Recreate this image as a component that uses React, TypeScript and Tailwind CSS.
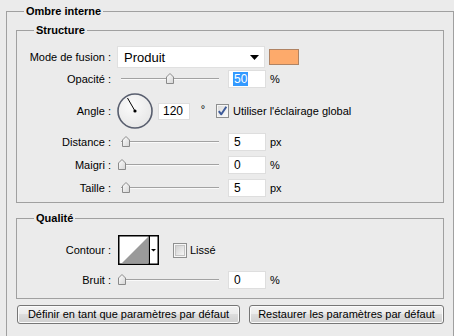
import React from "react";

function Thumb() {
  return (
    <svg width="8" height="11" viewBox="0 0 8 11">
      <defs>
        <linearGradient id="tg" x1="0" y1="0" x2="1" y2="1">
          <stop offset="0" stopColor="#ffffff" />
          <stop offset="1" stopColor="#d4d4d4" />
        </linearGradient>
      </defs>
      <path d="M0.5 4 L4 0.5 L7.5 4 V10.5 H0.5 Z" fill="url(#tg)" stroke="#8a8a8a" strokeWidth="1" />
    </svg>
  );
}

function Slider({ center }: { center: number }) {
  // container starts at x=117, width 104
  const left = center - 4 - 117;
  return (
    <div className="relative w-[104px] h-[12px]">
      <div className="absolute left-[4px] top-[5px] w-[98px] h-[1px] bg-[#a2a2a2]" />
      <div className="absolute left-[4px] top-[6px] w-[98px] h-[1px] bg-[#fafafa]" />
      <div className="absolute top-0" style={{ left }}>
        <Thumb />
      </div>
    </div>
  );
}

function NumInput({ value, selected }: { value: string; selected?: boolean }) {
  return (
    <div className="w-[38px] h-[18px] bg-white border border-[#dedede] flex items-center pl-[4px] text-[12px] leading-[14px]">
      {selected ? <span className="bg-[#3399ff] text-white px-[1px]">{value}</span> : <span className="px-[1px]">{value}</span>}
    </div>
  );
}

function Label({ children }: { children: React.ReactNode }) {
  return <div className="w-[94px] text-right leading-[13px] shrink-0">{children}</div>;
}

function SliderRow({ label, center, value, unit, selected, className }: { label: string; center: number; value: string; unit: string; selected?: boolean; className?: string }) {
  return (
    <div className={"flex items-center h-[18px] " + (className ?? "")}>
      <Label>{label}</Label>
      <div className="ml-[6px]">
        <Slider center={center} />
      </div>
      <div className="ml-[7px]">
        <NumInput value={value} selected={selected} />
      </div>
      <div className="ml-[4px] leading-[13px]">{unit}</div>
    </div>
  );
}

function Dial() {
  return (
    <svg width="36" height="36" viewBox="0 0 36 36">
      <defs>
        <radialGradient id="dg" cx="0.4" cy="0.35" r="0.7">
          <stop offset="0" stopColor="#fbfbfb" />
          <stop offset="1" stopColor="#e6e6e6" />
        </radialGradient>
      </defs>
      <circle cx="18" cy="18" r="17" fill="url(#dg)" stroke="#585e6e" strokeWidth="1.6" />
      <line x1="18" y1="18" x2="10.5" y2="5" stroke="#000" strokeWidth="1" />
      <circle cx="18" cy="18" r="1.6" fill="#000" />
    </svg>
  );
}

function CheckOn() {
  return (
    <svg width="13" height="14" viewBox="0 0 13 14">
      <defs>
        <linearGradient id="cg" x1="0" y1="0" x2="1" y2="1">
          <stop offset="0" stopColor="#dcdcdc" />
          <stop offset="1" stopColor="#fafafa" />
        </linearGradient>
      </defs>
      <rect x="0.5" y="0.5" width="12" height="13" fill="#f6f6f6" stroke="#8e8f8f" />
      <rect x="2" y="2" width="9" height="10" fill="url(#cg)" />
      <path d="M2.8 7.2 L5.3 10.3 L10.3 2.8" fill="none" stroke="#3d5a99" strokeWidth="2" strokeLinejoin="round" />
    </svg>
  );
}

function CheckOff() {
  return (
    <svg width="14" height="15" viewBox="0 0 14 15">
      <defs>
        <linearGradient id="cg2" x1="0" y1="0" x2="1" y2="1">
          <stop offset="0" stopColor="#cfcfcf" />
          <stop offset="1" stopColor="#f7f7f7" />
        </linearGradient>
      </defs>
      <rect x="0.5" y="0.5" width="13" height="14" fill="#f6f6f6" stroke="#8e8f8f" />
      <rect x="2.5" y="2.5" width="9" height="10" fill="url(#cg2)" stroke="#c4c4c4" />
    </svg>
  );
}

function ContourThumb() {
  return (
    <svg width="41" height="30" viewBox="0 0 41 30">
      <rect x="0" y="0" width="41" height="30" fill="#000" />
      <rect x="1.5" y="1.5" width="29" height="27" fill="#fff" />
      <polygon points="3.5,28.5 30.5,1.5 30.5,28.5" fill="#9a9a9a" />
      <rect x="32" y="1.5" width="7.5" height="27" fill="#fff" />
      <polygon points="33,14 38,14 35.5,16.5" fill="#000" />
    </svg>
  );
}

function Button({ children, className }: { children: React.ReactNode; className?: string }) {
  return (
    <div
      className={
        "h-[19px] flex items-center justify-center rounded-[3px] border border-[#767676] shadow-[inset_0_0_0_1px_#fbfbfb] bg-[linear-gradient(to_bottom,#f3f3f3_0%,#ebebeb_50%,#dddddd_50%,#cfcfcf_100%)] leading-[13px] " +
        (className ?? "")
      }
    >
      {children}
    </div>
  );
}

export default function App() {
  return (
    <div className="w-[454px] h-[336px] overflow-hidden bg-[#ebebeb] pt-[5px] pl-[6px] pr-[1px] font-['Liberation_Sans',Arial,sans-serif] text-[11px] text-black">
      <fieldset className="border border-[#a0a0a0] h-[360px]">
        <legend className="ml-[17px] px-[2px] font-bold leading-[13px]">Ombre interne</legend>
        <div className="px-[9px] pt-[6px] flex flex-col">
          <fieldset className="border border-[#a0a0a0]">
            <legend className="ml-[17px] px-[2px] font-bold leading-[13px]">Structure</legend>
            <div className="pt-[9px] pb-[5px] flex flex-col">
              <div className="flex items-center h-[22px]">
                <Label>Mode de fusion :</Label>
                <div className="ml-[6px] w-[148px] h-[22px] bg-white border border-[#e0e0e0] flex items-center justify-between pl-[6px] pr-[5px]">
                  <span className="text-[13px] leading-[15px]">Produit</span>
                  <svg width="9" height="5" viewBox="0 0 9 5">
                    <polygon points="0,0 9,0 4.5,5" fill="#000" />
                  </svg>
                </div>
                <div className="ml-[4px] w-[30px] h-[16px] bg-[#fdaa6b] border border-[#b08363]" />
              </div>
              <SliderRow className="mt-[2px]" label="Opacité :" center={170} value="50" unit="%" selected />
              <div className="flex items-center h-[36px] mt-[5px]">
                <Label>Angle :</Label>
                <div className="ml-[6px]">
                  <Dial />
                </div>
                <div className="ml-[5px] w-[32px] h-[17px] bg-white border border-[#dedede] flex items-center pl-[4px] text-[12px] leading-[14px]">
                  120
                </div>
                <div className="w-[26px] text-center leading-[13px] -mt-[4px]">°</div>
                <CheckOn />
                <div className="ml-[4px] leading-[13px]">Utiliser l'éclairage global</div>
              </div>
              <SliderRow className="mt-[4px]" label="Distance :" center={126} value="5" unit="px" />
              <SliderRow className="mt-[5px]" label="Maigri :" center={122} value="0" unit="%" />
              <SliderRow className="mt-[5px]" label="Taille :" center={126} value="5" unit="px" />
            </div>
          </fieldset>
          <fieldset className="border border-[#a0a0a0] mt-[9px]">
            <legend className="ml-[17px] px-[2px] font-bold leading-[13px]">Qualité</legend>
            <div className="pt-[10px] pb-[9px] flex flex-col">
              <div className="flex items-center h-[30px]">
                <Label>Contour :</Label>
                <div className="ml-[7px]">
                  <ContourThumb />
                </div>
                <div className="ml-[14px] flex items-center">
                  <CheckOff />
                  <span className="ml-[3px] leading-[13px]">Lissé</span>
                </div>
              </div>
              <SliderRow className="mt-[6px]" label="Bruit :" center={122} value="0" unit="%" />
            </div>
          </fieldset>
          <div className="flex mt-[6px] pl-[1px] gap-[9px]">
            <Button className="w-[223px]">Définir en tant que paramètres par défaut</Button>
            <Button className="w-[195px]">Restaurer les paramètres par défaut</Button>
          </div>
        </div>
      </fieldset>
    </div>
  );
}
